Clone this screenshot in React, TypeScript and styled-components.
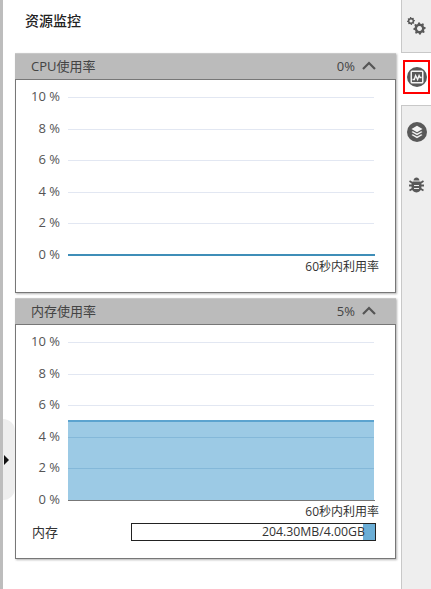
import React from "react";
import styled, { createGlobalStyle } from "styled-components";

const GlobalStyle = createGlobalStyle`
  html, body {
    margin: 0;
    padding: 0;
    height: 100%;
    background: #fff;
  }
  #root {
    height: 100%;
  }
  * {
    box-sizing: border-box;
  }
`;

const Page = styled.div`
  position: relative;
  display: flex;
  width: 431px;
  height: 589px;
  overflow: hidden;
  border-left: 3px solid #bdbdbd;
  font-family: "Open Sans", "Noto Sans CJK SC", sans-serif;
  font-size: 13px;
  color: #333;
`;

const Main = styled.main`
  width: 398px;
  padding: 0 5px 0 12px;
`;

const Title = styled.h1`
  margin: 0;
  padding-left: 10px;
  height: 53px;
  line-height: 42px;
  font-size: 14px;
  font-weight: 500;
  color: #222;
`;

const Panel = styled.section`
  margin-bottom: 5px;
  box-shadow: 1px 1px 2px rgba(0, 0, 0, 0.3);
`;

const PanelHeader = styled.div`
  display: flex;
  align-items: center;
  justify-content: space-between;
  height: 26px;
  padding: 0 20px 2px 16px;
  background: #bbb;
  border-top: 1px solid #c8c8c8;
  color: #444;
`;

const HeaderValue = styled.span`
  display: flex;
  align-items: center;
  gap: 7px;
`;

const PanelBody = styled.div<{ $height: number }>`
  height: ${(p) => p.$height}px;
  padding-top: 8px;
  background: #fff;
  border: 1px solid #777;
`;

const Chart = styled.div`
  display: flex;
`;

const Axis = styled.div`
  display: flex;
  flex-direction: column;
  justify-content: space-between;
  width: 44px;
  height: 176px;
  margin-top: -1px;
  text-align: right;
  line-height: 18px;
  color: #555;
`;

const Plot = styled.svg`
  display: block;
  margin: 8px 0 0 8px;
`;

const Caption = styled.div`
  margin-top: -5px;
  padding-right: 16px;
  height: 18px;
  font-size: 12px;
  line-height: 18px;
  text-align: right;
`;

const MemoryRow = styled.div`
  display: flex;
  align-items: center;
  margin-top: 1px;
  padding: 0 19px 0 16px;
`;

const MemoryLabel = styled.span`
  width: 99px;
`;

const MemoryBar = styled.div`
  position: relative;
  flex: 1;
  height: 18px;
  border: 1px solid #222;
  font-size: 12.3px;
  line-height: 16px;
  text-align: right;
  padding-right: 10px;
`;

const MemoryFill = styled.div`
  position: absolute;
  top: 0;
  right: 0;
  bottom: 0;
  background: #6baed6;
`;

const MemoryText = styled.span`
  position: relative;
`;

const SideNav = styled.nav`
  display: flex;
  flex-direction: column;
  width: 30px;
`;

const TabGroup = styled.div<{ $grow?: boolean }>`
  display: flex;
  flex-direction: column;
  align-items: center;
  flex: ${(p) => (p.$grow ? 1 : "none")};
  height: ${(p) => (p.$grow ? "auto" : "53px")};
  background: #eee;
  border-left: 1px solid #c8c8c8;
  border-top: ${(p) => (p.$grow ? "1px solid #c8c8c8" : "none")};
  border-bottom: ${(p) => (p.$grow ? "none" : "1px solid #c8c8c8")};
`;

const ActiveTab = styled.div`
  height: 52px;
  padding: 7px 1px 0 2px;
`;

const Highlight = styled.div`
  display: flex;
  align-items: center;
  justify-content: center;
  width: 27px;
  height: 34px;
  border: 2px solid #f00;
`;

const IconSlot = styled.span<{ $top: number }>`
  display: block;
  line-height: 0;
  margin-top: ${(p) => p.$top}px;
`;

const Collapse = styled.div`
  position: absolute;
  left: 0;
  top: 419px;
  display: flex;
  align-items: center;
  width: 12px;
  height: 81px;
  padding-left: 1px;
  background: #eee;
  border-radius: 0 12px 12px 0;
`;

const Arrow = styled.div`
  width: 0;
  height: 0;
  border-style: solid;
  border-width: 5px 0 5px 5px;
  border-color: transparent transparent transparent #111;
`;

const levels = ["10 %", "8 %", "6 %", "4 %", "2 %", "0 %"];
const gridY = [1, 32.6, 64.2, 95.8, 127.4];

const UsageChart = ({ value }: { value: number }) => {
  const top = 159 - (value / 10) * 158;
  return (
    <Chart>
      <Axis>
        {levels.map((l) => (
          <span key={l}>{l}</span>
        ))}
      </Axis>
      <Plot width="307" height="161" viewBox="0 0 307 161">
        {value > 0 && (
          <rect x="0" y={top} width="306" height={159 - top} fill="#9ccae5" />
        )}
        {gridY.map((y) => (
          <line
            key={y}
            x1="0"
            x2="306"
            y1={Math.round(y) + 0.5}
            y2={Math.round(y) + 0.5}
            stroke={y > top ? "#84b8d9" : "#e2e7f2"}
          />
        ))}
        {value > 0 ? (
          <>
            <line x1="0" x2="306" y1={top} y2={top} stroke="#5ba3cf" strokeWidth="2" />
            <line x1="0" x2="307" y1="159.5" y2="159.5" stroke="#777" />
          </>
        ) : (
          <line x1="0" x2="307" y1="159" y2="159" stroke="#3f8eb8" strokeWidth="2" />
        )}
      </Plot>
    </Chart>
  );
};

const Chevron = () => (
  <svg width="14" height="9" viewBox="0 0 14 9">
    <path d="M1 8 7 2l6 6" fill="none" stroke="#555" strokeWidth="2.2" />
  </svg>
);

const gearPath = (cx: number, cy: number, r: number) => {
  const teeth = 8;
  const pts: string[] = [];
  for (let i = 0; i < teeth * 4; i++) {
    const a = (i / (teeth * 4)) * Math.PI * 2 - Math.PI / 16;
    const rad = i % 4 < 2 ? r : r * 0.78;
    pts.push(`${(cx + Math.cos(a) * rad).toFixed(2)} ${(cy + Math.sin(a) * rad).toFixed(2)}`);
  }
  return `M${pts.join("L")}Z`;
};

const GearsIcon = () => (
  <svg width="19" height="18" viewBox="0 0 19 18">
    <path
      fillRule="evenodd"
      fill="#595959"
      d={`${gearPath(4, 4, 4)}M4 2.4a1.6 1.6 0 1 0 .01 0Z`}
    />
    <path
      fillRule="evenodd"
      fill="#595959"
      d={`${gearPath(12.5, 11.5, 6.2)}M12.5 9a2.5 2.5 0 1 0 .01 0Z`}
    />
  </svg>
);

const MonitorIcon = () => (
  <svg width="20" height="20" viewBox="0 0 20 20">
    <circle cx="10" cy="10" r="10" fill="#595959" />
    <rect x="3.5" y="3.5" width="13" height="13" rx="1.5" fill="#f4f4f4" />
    <rect x="5" y="5" width="10" height="10" fill="#595959" />
    <path d="M5.500 12.500h1.800L8.600 8.500l2 4 1.500-4 1 2h1.500" fill="none" stroke="#f4f4f4" strokeWidth="1.4" />
  </svg>
);

const LayersIcon = () => (
  <svg width="20" height="20" viewBox="0 0 20 20">
    <circle cx="10" cy="10" r="10" fill="#595959" />
    <path d="M10 3.8 15.500 7 10 10.200 4.500 7Z" fill="#f4f4f4" />
    <path d="M5.800 9.200 10 11.600l4.200-2.400 1.300.8L10 13.200 4.500 10Z" fill="#f4f4f4" />
    <path d="M5.800 12.200 10 14.600l4.200-2.400 1.300.8L10 16.200 4.500 13Z" fill="#f4f4f4" />
  </svg>
);

const BugIcon = () => (
  <svg width="15" height="16" viewBox="0 0 15 16">
    <path
      fill="#595959"
      d="M4.500 3.600C4.800 1.600 6 .6 7.500.6s2.700 1 3 3ZM3.600 4.600h7.800c.7.9 1 1.900 1 3v3c0 2.700-2.200 4.800-4.900 4.800S2.600 13.300 2.600 10.600v-3c0-1.100.3-2.100 1-3Z"
    />
    <path
      stroke="#595959"
      strokeWidth="1.8"
      d="M0 8.500h3M12 8.500h3M.5 4l3 2M14.500 4l-3 2M.5 13.500l3-1.800M14.500 13.500l-3-1.800"
    />
    <path stroke="#eee" strokeWidth="1.200" d="M5 8.500h5M5 11.500h5" />
  </svg>
);

const App = () => (
  <>
    <GlobalStyle />
    <Page>
      <Main>
        <Title>资源监控</Title>
        <Panel>
          <PanelHeader>
            <span>CPU使用率</span>
            <HeaderValue>
              0% <Chevron />
            </HeaderValue>
          </PanelHeader>
          <PanelBody $height={214}>
            <UsageChart value={0} />
            <Caption>60秒内利用率</Caption>
          </PanelBody>
        </Panel>
        <Panel>
          <PanelHeader>
            <span>内存使用率</span>
            <HeaderValue>
              5% <Chevron />
            </HeaderValue>
          </PanelHeader>
          <PanelBody $height={235}>
            <UsageChart value={5} />
            <Caption>60秒内利用率</Caption>
            <MemoryRow>
              <MemoryLabel>内存</MemoryLabel>
              <MemoryBar>
                <MemoryFill style={{ width: `${(204.3 / 4096) * 100}%` }} />
                <MemoryText>204.30MB/4.00GB</MemoryText>
              </MemoryBar>
            </MemoryRow>
          </PanelBody>
        </Panel>
      </Main>
      <SideNav>
        <TabGroup>
          <IconSlot $top={17}>
            <GearsIcon />
          </IconSlot>
        </TabGroup>
        <ActiveTab>
          <Highlight>
            <MonitorIcon />
          </Highlight>
        </ActiveTab>
        <TabGroup $grow>
          <IconSlot $top={16}>
            <LayersIcon />
          </IconSlot>
          <IconSlot $top={35}>
            <BugIcon />
          </IconSlot>
        </TabGroup>
      </SideNav>
      <Collapse>
        <Arrow />
      </Collapse>
    </Page>
  </>
);

export default App;
